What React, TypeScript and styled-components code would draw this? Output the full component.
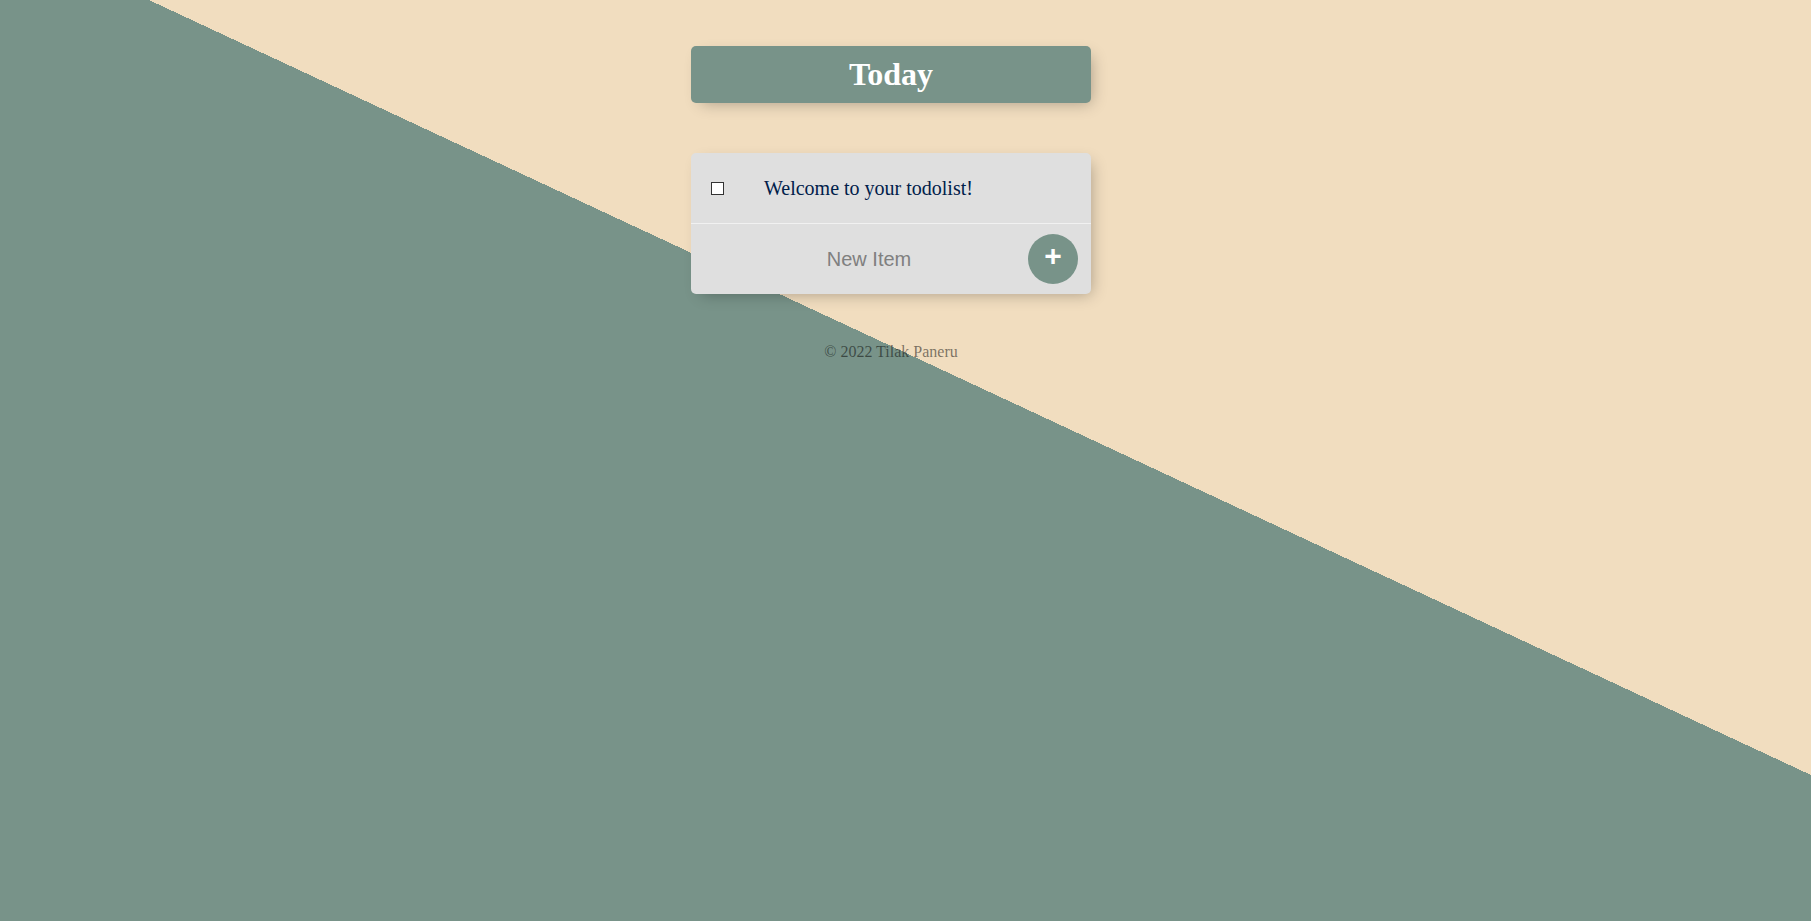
import React from "react";
import styled, { createGlobalStyle } from "styled-components";

const GlobalStyle = createGlobalStyle`
  html, body { margin: 0; padding: 0; }
  body { font-family: "Liberation Serif", "Times New Roman", serif; }
`;

const Page = styled.div`
  min-height: 100vh;
  box-sizing: border-box;
  padding: 46px 29px 40px 0;
  background: linear-gradient(25deg, #789389 56.1%, #f1ddbf 56.1%);
  display: flex;
  flex-direction: column;
  align-items: center;
`;

const Box = styled.div<{ $accent?: boolean }>`
  width: 400px;
  border-radius: 5px;
  box-shadow: 5px 5px 15px -5px rgba(0, 0, 0, 0.3);
  background: ${(p) => (p.$accent ? "#789389" : "#dfdfdf")};
  & + & { margin-top: 50px; }
`;

const Title = styled.h1`
  margin: 0;
  padding: 10px;
  text-align: center;
  color: #fff;
  font-size: 32px;
  line-height: 37px;
  font-weight: bold;
  font-family: "Liberation Serif", "Times New Roman", serif;
`;

const Item = styled.div`
  min-height: 70px;
  display: flex;
  align-items: center;
  border-bottom: 1px solid #f1f1f1;
  &:last-child { border-bottom: 0; }
`;

const Check = styled.input`
  appearance: none;
  -webkit-appearance: none;
  box-sizing: border-box;
  margin: 20px;
  width: 13px;
  height: 13px;
  border: 1px solid #333;
  border-radius: 0;
  background: #fff;
  &:checked { background: #789389; }
`;

const Text = styled.p`
  margin: 0;
  padding: 20px;
  font-size: 20px;
  font-weight: 200;
  color: #00204a;
  font-family: "Liberation Serif", "Times New Roman", serif;
`;

const Form = styled.form`
  display: flex;
  align-items: center;
  gap: 4px;
  margin-left: 20px;
`;

const TextInput = styled.input`
  box-sizing: border-box;
  width: 313px;
  height: 60px;
  border: none;
  background: transparent;
  text-align: center;
  font-size: 20px;
  padding-left: 5px;
  font-family: "Liberation Sans", Arial, sans-serif;
  &::placeholder { color: grey; opacity: 1; }
  &:focus { outline: none; box-shadow: inset 0 -3px 0 0 #789389; }
`;

const AddButton = styled.button`
  width: 50px;
  height: 50px;
  border-radius: 50%;
  border: 0;
  background: #789389;
  color: #fff;
  font-size: 30px;
  font-weight: bold;
  line-height: 1;
  padding: 0 0 6px;
  font-family: "Liberation Sans", Arial, sans-serif;
  display: flex;
  align-items: center;
  justify-content: center;
  cursor: pointer;
`;

const Footer = styled.footer`
  margin-top: 49px;
  color: rgba(0, 0, 0, 0.5);
  text-align: center;
  font-size: 16px;
  font-family: "Liberation Serif", "Times New Roman", serif;
`;

export default function App() {
  return (
    <>
      <GlobalStyle />
      <Page>
        <Box $accent>
          <Title>Today</Title>
        </Box>
        <Box>
          <Item>
            <Check type="checkbox" />
            <Text>Welcome to your todolist!</Text>
          </Item>
          <Item>
            <Form onSubmit={(e) => e.preventDefault()}>
              <TextInput type="text" placeholder="New Item" autoComplete="off" />
              <AddButton type="submit">+</AddButton>
            </Form>
          </Item>
        </Box>
        <Footer>© 2022 Tilak Paneru</Footer>
      </Page>
    </>
  );
}
